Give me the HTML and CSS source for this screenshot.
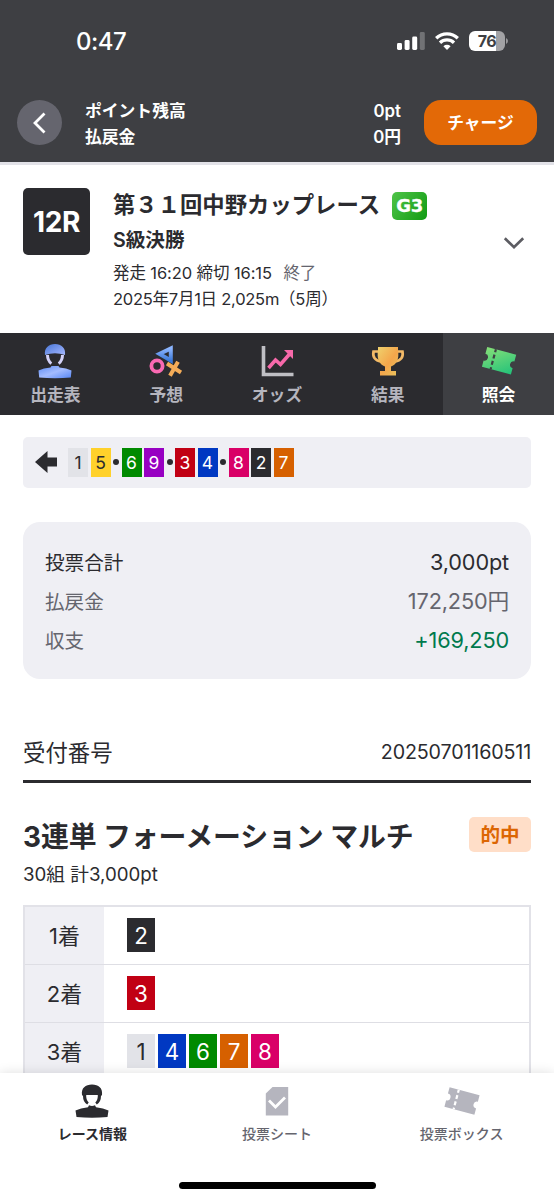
FILE: index.html
```html
<!DOCTYPE html>
<html lang="ja">
<head>
<meta charset="utf-8">
<meta name="viewport" content="width=device-width">
<title>レース照会</title>
<link rel="stylesheet" href="styles.css">
</head>
<body>
<div class="screen">
  <header class="header">
    <div class="status">
      <span class="clock">0:47</span>
      <div class="indicators">
        <svg class="signal" viewBox="0 0 28 18"><rect y="11" width="5" height="7" rx="1.4" fill="#fff"/><rect x="7.6" y="8" width="5" height="10" rx="1.4" fill="#fff"/><rect x="15.2" y="4.5" width="5" height="13.5" rx="1.4" fill="#fff"/><rect x="22.8" width="5" height="18" rx="1.4" fill="#717275"/></svg>
        <svg class="wifi" viewBox="0 0 24 18"><g fill="none" stroke="#fff" stroke-width="3.3"><path d="M1.2 6.300a15.400 15.400 0 0 1 21.600 0"/><path d="M5 10.800a10 10 0 0 1 14 0"/></g><path fill="#fff" d="M12 18l-3.600-3.700a5.200 5.200 0 0 1 7.200 0z"/></svg>
        <div class="battery"><span>76</span></div>
        <svg class="battery-tip" viewBox="0 0 2 6"><path d="M0 0q2 1 2 3t-2 3z" fill="#99999c"/></svg>
      </div>
    </div>
    <div class="wallet">
      <button class="back" aria-label="戻る"><svg viewBox="0 0 14 22"><path d="M12.500 1.500L3 11l9.500 9.500" fill="none" stroke="#fff" stroke-width="2.800"/></svg></button>
      <dl class="balance">
        <div><dt>ポイント残高</dt><dd>0pt</dd></div>
        <div><dt>払戻金</dt><dd>0円</dd></div>
      </dl>
      <button class="charge">チャージ</button>
    </div>
  </header>

  <section class="race">
    <div class="race-no">12R</div>
    <div class="race-info">
      <div class="race-title"><h1>第３１回中野カップレース</h1><span class="grade"><b>G3</b></span></div>
      <h2>S級決勝</h2>
      <p class="race-time">発走 16:20 締切 16:15 <span>終了</span></p>
      <p class="race-date">2025年7月1日 2,025m（5周）</p>
    </div>
    <svg class="chevron" viewBox="0 0 22 14"><path d="M1.800 2.200l9.200 9 9.200-9" fill="none" stroke="#5c5c62" stroke-width="2.700"/></svg>
  </section>

  <nav class="tabs">
    <a class="tab"><svg viewBox="0 0 36 36"><defs><linearGradient id="blue" x1="0" y1="0" x2="1" y2="1"><stop stop-color="#5f8df5"/><stop offset=".5" stop-color="#a4bcff"/><stop offset="1" stop-color="#5686f5"/></linearGradient><linearGradient id="cap" x1="0" y1="0" x2="1" y2="1"><stop stop-color="#4876d6"/><stop offset="1" stop-color="#a6b8ff"/></linearGradient></defs><path fill="url(#cap)" d="M8 12C7 5 11.500 1 18 1s11 4 10 11q-10-3.600-20 0z"/><path fill="#d4d2f8" d="M9 12h3q0 5 3.200 7.500l-1.700 2.300Q9 18 9 12zm18 0h-3q0 5-3.200 7.500l1.700 2.300Q27 18 27 12z"/><path fill="url(#blue)" d="M1.500 27.500q5-2.300 12-3l1-1.500h7l1 1.500q7 .7 12 3L33.800 34.500q-15.800 1.500-31.600 0z"/></svg><span>出走表</span></a>
    <a class="tab"><svg viewBox="0 0 36 36"><defs><linearGradient id="tri" x1="0" y1="0" x2="0" y2="1"><stop stop-color="#8cb5ff"/><stop offset="1" stop-color="#3c79d8"/></linearGradient></defs><path d="M22.800 5.500v12L11.500 11z" fill="none" stroke="url(#tri)" stroke-width="4"/><circle cx="9" cy="23" r="5.600" fill="none" stroke="#fa69b2" stroke-width="3.800"/><path d="M19 20.500l14 9M30 18.800l-8 14" stroke="#f4ac58" stroke-width="4"/></svg><span>予想</span></a>
    <a class="tab"><svg viewBox="0 0 36 36"><path d="M4.500 3v28.500H34.500" fill="none" stroke="#bfbfc4" stroke-width="3.600"/><path d="M9.500 25l7-8 5 4.500L31.500 10" fill="none" stroke="#f769aa" stroke-width="3.600"/><path fill="#f769aa" d="M25 7h9v9z"/></svg><span>オッズ</span></a>
    <a class="tab"><svg viewBox="0 0 36 36"><defs><linearGradient id="gold" x1="0" y1="0" x2="1" y2="1"><stop stop-color="#efd16d"/><stop offset=".55" stop-color="#f4a64b"/><stop offset="1" stop-color="#e8c45e"/></linearGradient></defs><path fill="none" stroke="#f3ba68" stroke-width="2.700" d="M9 8.500H3.500Q2 17 11 18.500M27 8.500h5.500q1.500 8.500-7.500 10"/><path fill="url(#gold)" d="M8 4h20v3q2 13-7 16.500V28h5v4.500H10V28h5v-4.500Q6 20 8 7z"/></svg><span>結果</span></a>
    <a class="tab active"><svg viewBox="0 0 36 36"><defs><linearGradient id="green" x1="0" y1="0" x2="1" y2="1"><stop stop-color="#86df78"/><stop offset="1" stop-color="#22c27a"/></linearGradient></defs><g transform="rotate(15 18 18)"><path fill="url(#green)" d="M3 7.500h30v7a3.500 3.500 0 0 0 0 7V28H3v-6.500a3.500 3.500 0 0 0 0-7z"/><path d="M12 7.500V28" stroke="#3e3f43" stroke-width="2.200" stroke-dasharray="3 2.500 4 2.500 4 2.500"/></g></svg><span>照会</span></a>
  </nav>

  <main class="content">
    <div class="lineup">
      <svg class="arrow" viewBox="0 0 22 22"><path fill="#2b2b2f" d="M0 11L12.500 0v6.500H22v9h-9.500V22z"/></svg>
      <div class="bikes"><b class="n1">1</b><b class="n5">5</b><i></i><b class="n6">6</b><b class="n9">9</b><i></i><b class="n3">3</b><b class="n4">4</b><i></i><b class="n8">8</b><b class="n2">2</b><b class="n7">7</b></div>
    </div>
    <dl class="summary">
      <div class="total"><dt>投票合計</dt><dd>3,000pt</dd></div>
      <div><dt>払戻金</dt><dd>172,250円</dd></div>
      <div class="gain"><dt>収支</dt><dd>+169,250</dd></div>
    </dl>
    <div class="receipt"><span>受付番号</span><span class="receipt-no">20250701160511</span></div>
    <div class="bet-head"><h3>3連単 フォーメーション マルチ</h3><span class="hit">的中</span></div>
    <p class="bet-sub">30組 計3,000pt</p>
    <div class="table">
      <div class="row"><div class="place">1着</div><div class="picks"><b class="n2">2</b></div></div>
      <div class="row"><div class="place">2着</div><div class="picks"><b class="n3">3</b></div></div>
      <div class="row"><div class="place">3着</div><div class="picks"><b class="n1">1</b><b class="n4">4</b><b class="n6">6</b><b class="n7">7</b><b class="n8">8</b></div></div>
    </div>
  </main>

  <footer class="bottom">
    <div class="menu">
      <a class="current"><svg viewBox="0 0 36 36"><path fill="#2b2b2f" d="M8 12C7 5 11.500 1.500 18 1.500S29 5 28 12l-1 1q0 6-4.200 8.500l-1.500-2q2.800-3 2.500-7.500H12.200q-.3 4.500 2.500 7.500l-1.500 2Q9 19 9 13zM1.500 27.500q5-2.500 12.500-3.300l1-1.900q3 1.400 6 0l1 1.900q7.500.8 12.500 3.300L33.500 34q-15.500 1.500-31 0z"/></svg><span>レース情報</span></a>
      <a><svg viewBox="0 0 36 36"><path fill="#b5b5be" d="M13.500 4h15.700v28.500H6.800V10.500z"/><path d="M10 17.500l6.500 6.500 9.500-9.500" fill="none" stroke="#fff" stroke-width="2.800"/></svg><span>投票シート</span></a>
      <a><svg viewBox="0 0 36 36"><g transform="rotate(15 18 18)"><path fill="#b5b5be" d="M2.500 8h31v6.500a3.500 3.500 0 0 0 0 7V28h-31v-6.500a3.500 3.500 0 0 0 0-7z"/><path d="M12 8v20" stroke="#fff" stroke-width="2.200" stroke-dasharray="3 2.500 4 2.500 4 2.500"/></g></svg><span>投票ボックス</span></a>
    </div>
    <div class="home"></div>
  </footer>
</div>
</body>
</html>
```
FILE: styles.css
```css
* { box-sizing: border-box; margin: 0; padding: 0; }
body { background: #fff; color: #2b2b2f; font-family: Inter, "Noto Sans CJK JP", sans-serif; }
button { border: 0; color: inherit; font: inherit; }
svg { display: block; flex: none; }
i, b { font-style: normal; font-weight: 400; }

.screen { display: flex; flex-direction: column; width: 554px; height: 1200px; overflow: hidden; }

.header { flex: none; height: 165px; background: #3e3f43; border-bottom: 3px solid #e2e2e8; color: #fff; }
.status { display: flex; justify-content: space-between; height: 100px; padding: 26px 46px 0 76px; }
.clock { height: 30px; font-size: 24px; font-weight: 500; line-height: 32px; letter-spacing: -0.5px; }
.indicators { display: flex; align-items: center; height: 30px; }
.signal { width: 28px; height: 18px; }
.wifi { width: 24px; height: 18px; margin-left: 10px; }
.battery { width: 36px; height: 20px; margin-left: 10px; border-radius: 6px; background: linear-gradient(90deg, #fff 76%, #a2a2a5 76%); color: #3e3f43; font-size: 16px; font-weight: 700; line-height: 20px; letter-spacing: -0.5px; text-align: center; }
.battery-tip { width: 2px; height: 6px; margin-left: 1px; }
.wallet { display: flex; height: 45px; padding: 0 17px; }
.back { display: grid; place-items: center; width: 45px; height: 45px; border-radius: 50%; background: #65656e; }
.back svg { width: 14px; height: 22px; margin-right: 1px; }
.balance { flex: 1; margin: -2px 23px 0; }
.balance div { display: flex; justify-content: space-between; height: 25.5px; line-height: 26px; font-size: 16.8px; font-weight: 600; }
.charge { width: 113px; height: 45px; border-radius: 17px; background: #e36907; font-size: 16.8px; font-weight: 700; line-height: 47px; }

.race { display: flex; flex: none; height: 168px; padding: 23px 29px 0 23px; }
.race-no { width: 67px; height: 67px; border-radius: 5px; background: #2b2b2f; color: #fff; font-size: 28px; font-weight: 700; line-height: 68px; letter-spacing: -0.3px; text-align: center; }
.race-info { flex: 1; margin-left: 23px; white-space: nowrap; }
.race-title { display: flex; align-items: center; height: 34px; }
h1 { font-size: 22.35px; font-weight: 600; line-height: 34px; }
.grade { display: grid; place-items: center; width: 35px; height: 28px; margin: 2px 0 0 12px; border-radius: 5px; background: linear-gradient(125deg, #4fc449, #119b12); color: #fff; }
.grade b { font-family: "DejaVu Sans", sans-serif; font-size: 18px; font-weight: 700; line-height: 20px; letter-spacing: -0.5px; -webkit-text-stroke: .3px #fff; }
h2 { height: 36px; font-size: 19.6px; font-weight: 600; line-height: 37px; }
.race p { height: 26px; font-size: 16.5px; line-height: 31px; letter-spacing: -0.1px; }
.race .race-date { line-height: 30px; letter-spacing: -0.25px; }
.race p span { margin-left: 7px; color: #65656e; }
.chevron { width: 22px; height: 14px; margin-top: 48px; }

.tabs { display: grid; flex: none; grid-template-columns: repeat(5, 1fr); height: 82px; background: #2b2b2f; }
.tab { display: flex; flex-direction: column; align-items: center; padding-top: 10px; color: #b5b5be; font-size: 16.8px; font-weight: 600; line-height: 32px; }
.tab svg { width: 36px; height: 36px; }
.tab.active { background: #3e3f43; color: #fff; }

.content { flex: none; height: 658px; padding: 22px 23px 0; overflow: hidden; }
.lineup { display: flex; align-items: center; height: 50.5px; padding: 0 12px; border-radius: 5px; background: #efeff4; }
.arrow { width: 22px; height: 22px; }
.bikes { display: flex; align-items: center; gap: 2.5px; margin-left: 11px; }
.bikes b { width: 20px; height: 28.5px; font-size: 17.5px; line-height: 29px; text-align: center; color: #fff; }
.bikes i { width: 6px; height: 6px; border-radius: 50%; background: #2b2b2f; }
.bikes .n1, .picks .n1 { background: #e2e3e8; color: #2b2b2f; }
.bikes .n5 { background: #ffd12b; color: #2b2b2f; }
.n2 { background: #2b2b2f; }
.n3 { background: #c10014; }
.n4 { background: #0038c2; }
.n6 { background: #008a00; }
.n7 { background: #d66000; }
.n8 { background: #d90067; }
.n9 { background: #9700c2; }

.summary { height: 157.5px; margin-top: 34px; padding: 21px 22px; border-radius: 17px; background: #efeff4; }
.summary div { display: flex; justify-content: space-between; height: 39.3px; color: #65656e; line-height: 39px; }
.summary dt { font-size: 19.6px; line-height: 40px; }
.summary dd { font-size: 21.7px; letter-spacing: -0.15px; }
.summary .total { color: #2b2b2f; }
.summary .gain dd { color: #007a4d; }

.receipt { display: flex; justify-content: space-between; height: 63px; margin-top: 41px; border-bottom: 3px solid #2b2b2f; padding-top: 11px; font-size: 22.4px; line-height: 44px; }
.receipt-no { font-size: 19.7px; line-height: 43px; letter-spacing: -0.15px; }
.bet-head { display: flex; align-items: center; justify-content: space-between; height: 35px; margin-top: 34px; }
h3 { padding-top: 5px; font-size: 27.9px; font-weight: 700; line-height: 36px; letter-spacing: -0.1px; white-space: nowrap; }
.hit { width: 62px; height: 35px; border-radius: 5px; background: #ffdec8; color: #dc6603; font-size: 19.6px; font-weight: 600; line-height: 37px; text-align: center; }
.bet-sub { height: 30px; margin-top: 7px; font-size: 18.7px; line-height: 32px; }
.table { margin-top: 16px; border: 2.5px solid #e2e2e8; border-bottom: 0; }
.row { display: flex; height: 57.8px; border-bottom: 1.5px solid #dedee4; }
.place { width: 79px; background: #efeff4; font-size: 22px; line-height: 58px; text-align: center; }
.picks { display: flex; align-items: center; gap: 3px; margin-left: 23px; }
.picks b { width: 28px; height: 34px; color: #fff; font-size: 22.4px; line-height: 35px; text-align: center; }

.bottom { position: relative; flex: none; height: 127px; background: #fff; box-shadow: 0 0 11px rgba(0, 0, 0, .13); }
.menu { display: grid; grid-template-columns: repeat(3, 1fr); height: 109px; padding-top: 10px; }
.menu a { display: flex; flex-direction: column; align-items: center; color: #65656e; font-size: 14px; font-weight: 500; line-height: 30px; }
.menu svg { width: 36px; height: 36px; }
.menu .current { color: #2b2b2f; font-weight: 600; }
.home { width: 197px; height: 7px; margin: 0 auto; border-radius: 4px; background: #000; }
```
